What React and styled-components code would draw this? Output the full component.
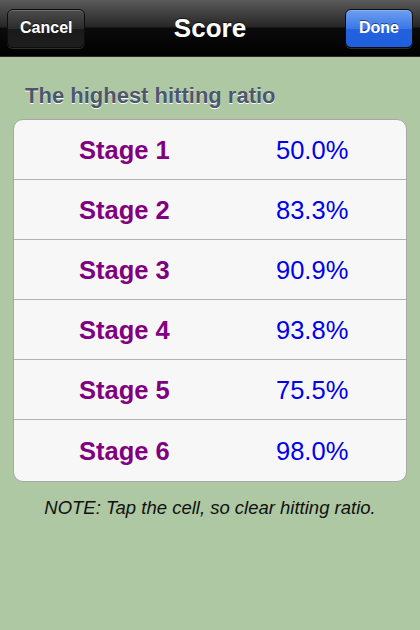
import React from 'react'
import styled, { createGlobalStyle } from 'styled-components'

const GlobalStyle = createGlobalStyle`
  html, body {
    margin: 0;
    padding: 0;
    background: #adc8a2;
    font-family: "Liberation Sans", Arial, sans-serif;
  }
`

const Page = styled.div`
  width: 420px;
  height: 630px;
  background: #adc8a2;
  display: flex;
  flex-direction: column;
`

const NavBar = styled.div`
  height: 56px;
  display: flex;
  align-items: center;
  justify-content: space-between;
  padding: 0 7px;
  background: linear-gradient(to bottom, #5a5a5a 0%, #262626 48%, #0b0b0b 50%, #000 100%);
  border-bottom: 1px solid #2a2a2a;
  position: relative;
`

const NavTitle = styled.div`
  position: absolute;
  left: 0;
  right: 0;
  text-align: center;
  color: #fff;
  font-weight: bold;
  font-size: 26px;
  text-shadow: 0 -1px 0 rgba(0,0,0,0.6);
  pointer-events: none;
`

const NavButton = styled.div`
  height: 37px;
  padding: 0 ${p => p.$pad}px;
  display: flex;
  align-items: center;
  border-radius: 6px;
  color: #fff;
  font-weight: bold;
  font-size: 16px;
  text-shadow: 0 -1px 0 rgba(0,0,0,0.5);
  border: 1px solid #0d0d0d;
  box-shadow: 0 1px 0 rgba(255,255,255,0.18), inset 0 1px 0 rgba(255,255,255,0.2);
  background: ${p => p.$primary
    ? 'linear-gradient(to bottom, #6d9ff0 0%, #3b78e6 50%, #2462dc 51%, #1e5fe0 100%)'
    : 'linear-gradient(to bottom, #4c4c4c 0%, #2c2c2c 50%, #1a1a1a 51%, #1e1e1e 100%)'};
  position: relative;
  z-index: 1;
`

const Content = styled.div`
  padding: 26px 13px 0;
`

const SectionHeader = styled.div`
  padding-left: 12px;
  font-size: 22px;
  font-weight: bold;
  color: #4c566c;
  text-shadow: 0 1px 0 #fff;
  margin-bottom: 10px;
`

const Table = styled.div`
  background: #f7f7f7;
  border: 1px solid #a8a8a8;
  border-radius: 10px;
  overflow: hidden;
`

const Row = styled.div`
  height: ${p => p.$h}px;
  box-sizing: border-box;
  padding-top: 2px;
  display: grid;
  grid-template-columns: 262px 1fr;
  align-items: center;
  border-top: ${p => (p.$first ? 'none' : '1px solid #b3b3b3')};
`

const Stage = styled.div`
  padding-left: 65px;
  font-size: 25.5px;
  font-weight: bold;
  color: #800080;
`

const Ratio = styled.div`
  font-size: 25.5px;
  color: #0000ee;
`

const Note = styled.div`
  margin-top: 15px;
  text-align: center;
  font-size: 18.5px;
  font-style: italic;
  color: #111;
`

const scores = [
  ['Stage 1', '50.0%'],
  ['Stage 2', '83.3%'],
  ['Stage 3', '90.9%'],
  ['Stage 4', '93.8%'],
  ['Stage 5', '75.5%'],
  ['Stage 6', '98.0%'],
]

export default function App() {
  return (
    <Page>
      <GlobalStyle />
      <NavBar>
        <NavButton $pad={12}>Cancel</NavButton>
        <NavTitle>Score</NavTitle>
        <NavButton $primary $pad={13}>Done</NavButton>
      </NavBar>
      <Content>
        <SectionHeader>The highest hitting ratio</SectionHeader>
        <Table>
          {scores.map(([stage, ratio], i) => (
            <Row
              key={stage}
              $first={i === 0}
              $h={i === 0 ? 59 : i === scores.length - 1 ? 62 : 60}
            >
              <Stage>{stage}</Stage>
              <Ratio>{ratio}</Ratio>
            </Row>
          ))}
        </Table>
        <Note>NOTE: Tap the cell, so clear hitting ratio.</Note>
      </Content>
    </Page>
  )
}
